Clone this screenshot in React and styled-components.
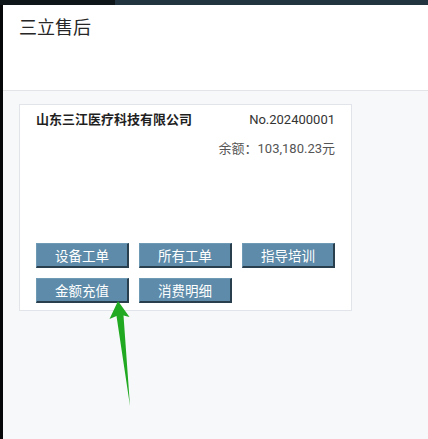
import React from "react";
import styled, { createGlobalStyle } from "styled-components";

const Global = createGlobalStyle`
  html, body { margin: 0; padding: 0; }
  body {
    background: #f7f8fa;
    font-family: Roboto, "Noto Sans CJK SC", sans-serif;
  }
`;

const Page = styled.div`
  position: relative;
  width: 428px;
  height: 439px;
  display: flex;
  flex-direction: column;
  overflow: hidden;
  background: #f7f8fa;
`;

const TopBar = styled.div`
  height: 5px;
  flex: none;
  display: flex;
`;

const TopSeg = styled.div`
  width: ${(p) => p.$w || "auto"};
  flex: ${(p) => (p.$w ? "none" : "1")};
  background: ${(p) => p.$c};
`;

const Body = styled.div`
  flex: 1;
  display: flex;
`;

const Strip = styled.div`
  width: 3px;
  background: #050708;
  flex: none;
`;

const Main = styled.div`
  flex: 1;
  display: flex;
  flex-direction: column;
`;

const Header = styled.div`
  height: 86px;
  box-sizing: border-box;
  background: #fff;
  border-bottom: 1px solid #e2e4e7;
  padding: 9px 16px 0;
  font-size: 18px;
  line-height: 28px;
  color: #262626;
`;

const Content = styled.div`
  padding: 13px 16px 0;
`;

const Card = styled.div`
  width: 333px;
  height: 207px;
  box-sizing: border-box;
  background: #fff;
  border: 1px solid #e1e4e8;
  padding: 5px 16px 7px;
  display: flex;
  flex-direction: column;
`;

const Row = styled.div`
  display: flex;
  justify-content: ${(p) => p.$justify || "space-between"};
  align-items: center;
  line-height: 20px;
  font-size: 13px;
  margin-top: ${(p) => p.$mt || 0}px;
`;

const Company = styled.span`
  font-weight: bold;
  color: #1f1f1f;
`;

const Code = styled.span`
  color: #333;
`;

const Balance = styled.span`
  color: #555;
`;

const Buttons = styled.div`
  margin-top: auto;
  display: grid;
  grid-template-columns: repeat(3, 93px);
  column-gap: 10px;
  row-gap: 10px;
`;

const Btn = styled.button`
  height: 25px;
  box-sizing: border-box;
  padding: 0;
  margin: 0;
  background: #5d8ba9;
  border-style: solid;
  border-width: 1px 2px 2px 1px;
  border-color: #6f9ab5 #2a3f4d #2a3f4d #6f9ab5;
  color: #fff;
  font-family: "Noto Sans CJK SC", sans-serif;
  font-size: 13.5px;
  line-height: 20px;
  cursor: pointer;
`;

const Arrow = styled.svg`
  position: absolute;
  left: 0;
  top: 0;
  pointer-events: none;
`;

export default function App() {
  const labels = ["设备工单", "所有工单", "指导培训", "金额充值", "消费明细"];
  return (
    <Page>
      <Global />
      <TopBar>
        <TopSeg $w="115px" $c="#0e1619" />
        <TopSeg $c="#233441" />
      </TopBar>
      <Body>
        <Strip />
        <Main>
          <Header>三立售后</Header>
          <Content>
            <Card>
              <Row>
                <Company>山东三江医疗科技有限公司</Company>
                <Code>No.202400001</Code>
              </Row>
              <Row $justify="flex-end" $mt={9}>
                <Balance>余额：103,180.23元</Balance>
              </Row>
              <Buttons>
                {labels.map((l) => (
                  <Btn key={l}>{l}</Btn>
                ))}
              </Buttons>
            </Card>
          </Content>
        </Main>
      </Body>
      <Arrow width="428" height="439" viewBox="0 0 428 439">
        <polygon
          points="118,301 129.5,317 123.5,315.5 130,406 116.5,316 109.5,319"
          fill="#21a921"
        />
      </Arrow>
    </Page>
  );
}
